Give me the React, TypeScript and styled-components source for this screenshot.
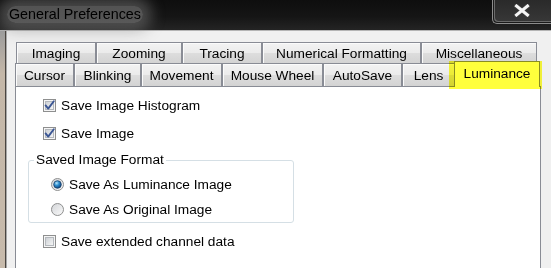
import React from 'react'
import styled, { createGlobalStyle } from 'styled-components'

const GlobalStyle = createGlobalStyle`
  html, body {
    margin: 0;
    padding: 0;
    background: #f0f0f0;
  }
  body {
    font-family: "Liberation Sans", Arial, sans-serif;
  }
`

const Window = styled.div`
  width: 551px;
  height: 268px;
  overflow: hidden;
  display: flex;
  flex-direction: column;
  background: #f0f0f0;
`

const TitleBar = styled.div`
  height: 30px;
  flex: none;
  display: flex;
  align-items: flex-start;
  background: linear-gradient(180deg, #0e0e0e 0%, #151515 55%, #242424 100%);
  border-bottom: 1px solid #b4b4b4;
`

const TitleText = styled.span`
  margin: 6px 0 0 7px;
  padding: 0 2px;
  font-size: 14.3px;
  line-height: 17px;
  color: #000;
  border-radius: 12px;
  background: rgba(150, 150, 150, 0.5);
  box-shadow: 0 0 14px 9px rgba(140, 140, 140, 0.45);
`

const CloseButton = styled.div`
  margin-left: auto;
  width: 58px;
  height: 21px;
  display: flex;
  align-items: center;
  justify-content: center;
  background: linear-gradient(180deg, #2a2a2a, #383838);
  border-left: 1px solid #8c8c8c;
  border-bottom: 1px solid #8c8c8c;
  border-bottom-left-radius: 5px;
  box-shadow: inset 1px -1px 0 #1a1a1a, inset 2px -2px 0 #6a6a6a;
  padding-bottom: 2px;
`

const Main = styled.div`
  flex: 1;
  display: flex;
  min-height: 0;
`

const FrameEdge = styled.div`
  width: 5px;
  flex: none;
  background: linear-gradient(180deg, #9c9c9c 0%, #c4b7a8 18%, #c7baab 100%);
  border-right: 1px solid #4a4540;
`

const Dialog = styled.div`
  flex: 1;
  display: flex;
  flex-direction: column;
  padding-top: 11px;
  border-left: 1px solid #a8a8a8;
  position: relative;
`

const TabRow = styled.div<{ $inset: number; $h: number }>`
  display: flex;
  align-items: flex-end;
  height: ${p => p.$h}px;
  margin-left: ${p => p.$inset}px;
  flex: none;
`

const Tab = styled.div<{ $w: number }>`
  width: ${p => p.$w}px;
  height: 100%;
  box-sizing: border-box;
  flex: none;
  display: flex;
  align-items: center;
  justify-content: center;
  padding-top: 1px;
  font-size: 13.7px;
  color: #000;
  white-space: nowrap;
  border: 1px solid #898c95;
  border-bottom: none;
  background: linear-gradient(180deg, #f3f3f3 0%, #ebebeb 48%, #dddddd 52%, #d3d3d3 100%);
  box-shadow: inset 1px 1px 0 #fbfbfb;
`

const ActiveTab = styled(Tab)`
  position: relative;
  height: 26px;
  margin-left: -1px;
  margin-bottom: -1px;
  padding: 0 0 3px;
  background: #fff;
  box-shadow: none;
`

const Highlight = styled.span`
  position: absolute;
  left: -6px;
  top: -1px;
  right: -3px;
  bottom: -2px;
  background: #ffff3c;
  mix-blend-mode: multiply;
  pointer-events: none;
`

const Panel = styled.div`
  flex: 1;
  margin: 0 10px 0 8px;
  padding: 11px 0 0 12px;
  background: #fff;
  border: 1px solid #898c95;
  border-bottom: none;
  display: flex;
  flex-direction: column;
  align-items: flex-start;
`

const OptionRow = styled.label<{ $top: number; $indent: number }>`
  display: flex;
  align-items: center;
  gap: 5px;
  height: 14px;
  margin-top: ${p => p.$top}px;
  margin-left: ${p => p.$indent}px;
  font-size: 13.7px;
  color: #000;
  white-space: nowrap;
`

const Group = styled.fieldset`
  width: 266px;
  box-sizing: border-box;
  margin: 13px 0 0 0;
  padding: 0 0 6px 5px;
  border: 1px solid #d5dfe5;
  border-radius: 3px;
  min-width: 0;
`

const GroupTitle = styled.legend`
  padding: 0 2px;
  font-size: 13.7px;
  line-height: 14px;
  color: #000;
`

const CheckBox = ({ checked }: { checked: boolean }) => (
  <svg width="13" height="13" viewBox="0 0 13 13">
    <defs>
      <linearGradient id="cbfill" x1="0" y1="0" x2="1" y2="1">
        <stop offset="0" stopColor="#cbcfd4" />
        <stop offset="1" stopColor="#f7f7f7" />
      </linearGradient>
    </defs>
    <rect x="0.5" y="0.5" width="12" height="12" fill="#f5f5f5" stroke="#8e8f8f" />
    <rect x="2.5" y="2.5" width="8" height="8" fill="url(#cbfill)" stroke="#b4b8bd" />
    {checked && (
      <path d="M2.6 6.4 L5.2 9.6 L10.8 2.2" fill="none" stroke="#3b5694" strokeWidth="1.9" strokeLinecap="round" strokeLinejoin="round" />
    )}
  </svg>
)

const Radio = ({ checked }: { checked: boolean }) => (
  <svg width="13" height="13" viewBox="0 0 13 13">
    <defs>
      <linearGradient id="rbfill" x1="0" y1="0" x2="1" y2="1">
        <stop offset="0" stopColor="#d2d4d7" />
        <stop offset="1" stopColor="#fbfbfb" />
      </linearGradient>
      <radialGradient id="rbdot" cx="0.38" cy="0.32" r="0.7">
        <stop offset="0" stopColor="#b8e6fb" />
        <stop offset="0.45" stopColor="#2e8fd0" />
        <stop offset="1" stopColor="#0b3f78" />
      </radialGradient>
    </defs>
    <circle cx="6.5" cy="6.5" r="6" fill="url(#rbfill)" stroke="#8e8f8f" />
    {checked && <circle cx="6.5" cy="6.5" r="3.8" fill="url(#rbdot)" stroke="#1c3f66" strokeWidth="0.8" />}
  </svg>
)

const CloseGlyph = () => (
  <svg width="16" height="13" viewBox="0 0 16 13">
    <path d="M2.5 2 L13.5 11 M13.5 2 L2.5 11" stroke="#3a3a3a" strokeWidth="5" strokeLinecap="square" />
    <path d="M2.5 2 L13.5 11 M13.5 2 L2.5 11" stroke="#f4f4f4" strokeWidth="3" strokeLinecap="square" />
  </svg>
)

const topTabs = [
  { label: 'Imaging', w: 80 },
  { label: 'Zooming', w: 86 },
  { label: 'Tracing', w: 80 },
  { label: 'Numerical Formatting', w: 159 },
  { label: 'Miscellaneous', w: 116 },
]

const bottomTabs = [
  { label: 'Cursor', w: 59 },
  { label: 'Blinking', w: 67 },
  { label: 'Movement', w: 81 },
  { label: 'Mouse Wheel', w: 101 },
  { label: 'AutoSave', w: 79 },
  { label: 'Lens', w: 53 },
]

const App = () => {
  return (
    <Window>
      <GlobalStyle />
      <TitleBar>
        <TitleText>General Preferences</TitleText>
        <CloseButton>
          <CloseGlyph />
        </CloseButton>
      </TitleBar>
      <Main>
        <FrameEdge />
        <Dialog>
          <TabRow $inset={9} $h={21}>
            {topTabs.map(t => (
              <Tab key={t.label} $w={t.w}>{t.label}</Tab>
            ))}
          </TabRow>
          <TabRow $inset={8} $h={23}>
            {bottomTabs.map(t => (
              <Tab key={t.label} $w={t.w}>{t.label}</Tab>
            ))}
            <ActiveTab $w={86}>
              Luminance
              <Highlight />
            </ActiveTab>
          </TabRow>
          <Panel>
            <OptionRow $top={0} $indent={15}>
              <CheckBox checked />
              Save Image Histogram
            </OptionRow>
            <OptionRow $top={14} $indent={15}>
              <CheckBox checked />
              Save Image
            </OptionRow>
            <Group>
              <GroupTitle>Saved Image Format</GroupTitle>
              <OptionRow $top={10} $indent={17}>
                <Radio checked />
                Save As Luminance Image
              </OptionRow>
              <OptionRow $top={11} $indent={17}>
                <Radio checked={false} />
                Save As Original Image
              </OptionRow>
            </Group>
            <OptionRow $top={11} $indent={15}>
              <CheckBox checked={false} />
              Save extended channel data
            </OptionRow>
          </Panel>
        </Dialog>
      </Main>
    </Window>
  )
}

export default App
